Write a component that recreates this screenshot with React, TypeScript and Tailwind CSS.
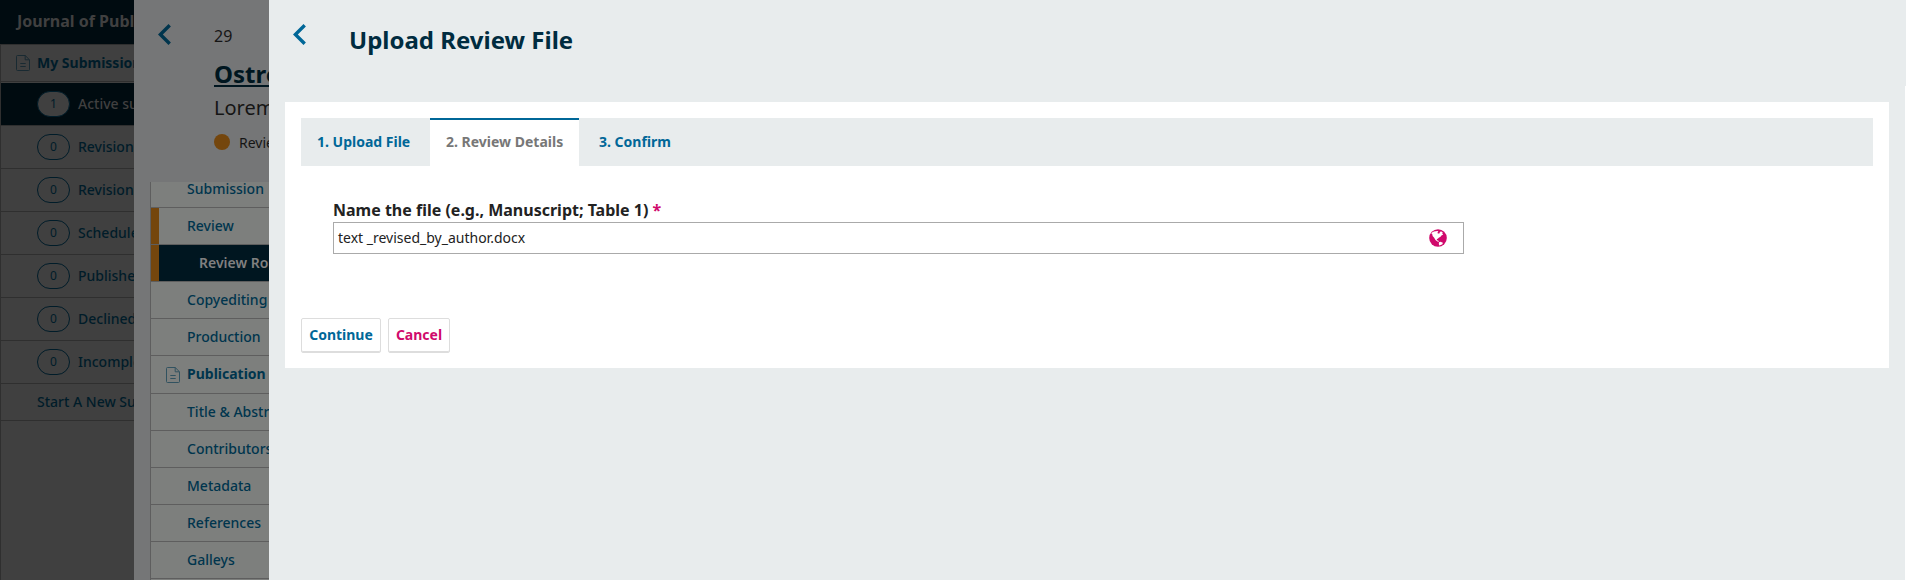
import type { ReactNode } from 'react';

const statusItems = ['Revision', 'Revision', 'Schedule', 'Publishe', 'Declined', 'Incomple'];
const publicationItems = ['Title & Abstract', 'Contributors', 'Metadata', 'References', 'Galleys'];

function DocIcon({ className }: { className: string }) {
  return (
    <svg className={className} width="14" height="16" viewBox="0 0 14 16" fill="none" stroke="currentColor">
      <path d="M1.5.5h7.7l4.3 4.3v9.7a1 1 0 0 1-1 1h-11a1 1 0 0 1-1-1v-13a1 1 0 0 1 1-1zM9.2.5v4.3h4.3M4.3 8.5h5.4M4.3 11.5h5.4" />
    </svg>
  );
}

function GlobeIcon() {
  return (
    <svg width="18" height="18" viewBox="0 0 18 18">
      <circle cx="9" cy="9" r="8.8" fill="#d00a6c" />
      <path
        fill="#fff"
        d="M3 3.6 5 2.4l3.4-.5 1 .6-.9.9.3 1.1 1.6.1.4-1.4L12 2.3l1.9 1.5-.7.6 1 1.3-1.5.5-1.2 1.6-1.8.9-.8 1.1-1.2.2.4 1.3 1.4.4.3 1.2-1.3-.5-2-1.5L5 8.5 3.6 7.1 3.3 5.2l-.9-.5zM10 13.2l1.5-.5 2.4 1.1-.5 1.4-1.6.9-1.7.4-.3-1.7z"
      />
    </svg>
  );
}

function Chevron({ className }: { className: string }) {
  return (
    <svg className={className} width="13" height="21" viewBox="0 0 13 21" fill="none" stroke="currentColor" strokeWidth="3.4">
      <path d="M11.7 1.3 2.4 10.5l9.3 9.2" />
    </svg>
  );
}

function Label({ children }: { children: ReactNode }) {
  return <span className="pb-0.5">{children}</span>;
}

function Pill({ children, active }: { children: ReactNode; active?: boolean }) {
  return (
    <span
      className={
        active
          ? 'flex h-[26px] w-[33px] shrink-0 items-center justify-center rounded-full border border-[#001c29] bg-[#404040] text-[12px] font-normal text-[#001c29]'
          : 'flex h-[26px] w-[33px] shrink-0 items-center justify-center rounded-full border border-[#001c29] text-[12px] font-normal text-[#001c29]'
      }
    >
      {children}
    </span>
  );
}

function SubItem({ label }: { label: string }) {
  return (
    <a className="flex h-[37px] shrink-0 items-center border-b border-[#5e5e5e] pl-[36px] text-[#00354d]">
      <Label>{label}</Label>
    </a>
  );
}

function Background() {
  return (
    <aside className="flex w-[134px] shrink-0 flex-col overflow-hidden whitespace-nowrap bg-[#404040] text-[14px] font-medium text-[#001c29]">
      <div className="flex h-[44px] shrink-0 items-center bg-[#000b10] pb-[3px] pl-[17px] text-[16px] font-bold text-[#404040]">
        Journal of Public Knowledge
      </div>
      <nav className="flex grow flex-col border-l border-[#2f2f2f]">
        <a className="flex h-[38px] shrink-0 items-center border-y border-[#2f2f2f] pl-[15px] font-bold">
          <DocIcon className="mr-[7px] shrink-0 opacity-60" />
          <Label>My Submissions</Label>
        </a>
        <a className="mt-px flex h-[43px] shrink-0 items-center gap-2 border-b border-[#2f2f2f] bg-[#000b10] pl-[36px] text-[#404040]">
          <Pill active>1</Pill>
          <Label>Active submissions</Label>
        </a>
        {statusItems.map((label, i) => (
          <a key={i} className="flex h-[43px] shrink-0 items-center gap-2 border-b border-[#2f2f2f] pl-[36px]">
            <Pill>0</Pill>
            <Label>{label}</Label>
          </a>
        ))}
        <a className="flex h-[37px] shrink-0 items-center border-b border-[#2f2f2f] pl-[36px]">
          <Label>Start A New Submission</Label>
        </a>
      </nav>
    </aside>
  );
}

function WorkflowPanel() {
  return (
    <section className="flex w-[135px] shrink-0 flex-col overflow-hidden whitespace-nowrap bg-[#757677] text-[#151515]">
      <header className="flex h-[182px] shrink-0">
        <Chevron className="mt-6 ml-6 shrink-0 text-[#00354d]" />
        <div className="ml-[43px] flex flex-col">
          <p className="mt-6 h-6 text-[16px] leading-6">29</p>
          <h2 className="mt-[11px] h-[30px] text-[24px] leading-[30px] font-bold text-[#001620] underline">Ostrom</h2>
          <p className="mt-1 h-[30px] text-[20px] leading-[30px]">Lorem ipsum</p>
          <p className="mt-[9px] flex h-5 items-center gap-[9px] text-[14px]">
            <span className="size-4 shrink-0 rounded-full bg-[#74460d]" />
            Review
          </p>
        </div>
      </header>
      <nav className="ml-4 flex grow flex-col border-l border-[#5e5e5e] bg-[#7d7f7d] text-[14px] font-medium">
        <a className="flex h-[26px] shrink-0 items-center border-b border-[#5e5e5e] pb-3 pl-[36px] text-[#00354d]">Submission</a>
        <a className="flex h-[37px] shrink-0 items-center border-b border-[#5e5e5e] text-[#00354d]">
          <span className="mr-7 h-full w-2 bg-[#74460d]" />
          <Label>Review</Label>
        </a>
        <a className="flex h-[37px] shrink-0 items-center border-b border-[#5e5e5e] bg-[#001620] font-semibold text-[#808080]">
          <span className="mr-10 h-full w-2 shrink-0 bg-[#74460d]" />
          <Label>Review Round 1</Label>
        </a>
        <SubItem label="Copyediting" />
        <SubItem label="Production" />
        <a className="flex h-[38px] shrink-0 items-center border-b border-[#5e5e5e] pl-[15px] font-bold text-[#00354d]">
          <DocIcon className="mr-[7px] shrink-0 opacity-60" />
          <Label>Publication</Label>
        </a>
        {publicationItems.map((label) => (
          <SubItem key={label} label={label} />
        ))}
      </nav>
    </section>
  );
}

function UploadPanel() {
  return (
    <main className="flex grow bg-[#e8eced] text-[#222]">
      <div className="flex grow flex-col pl-4">
        <header className="flex h-[102px] shrink-0">
          <Chevron className="mt-6 ml-2 text-[#006798]" />
          <h1 className="mt-6 ml-[43px] h-8 text-[24px] leading-8 font-bold text-[#002c40]">Upload Review File</h1>
        </header>
        <div className="mr-4 flex h-[266px] flex-col bg-white px-4 pt-4">
          <div className="flex h-12 shrink-0 bg-[#e8eced] text-[14px] font-bold text-[#006798]">
            <a className="flex w-[129px] items-center pb-0.5 pl-4">1. Upload File</a>
            <a className="flex w-[149px] items-center border-t-2 border-[#006798] bg-white pb-1 pl-4 text-[#777]">2. Review Details</a>
            <a className="flex items-center pb-0.5 pl-5">3. Confirm</a>
          </div>
          <form className="mt-8 flex flex-col pl-8">
            <label className="h-6 text-[16px] leading-6 font-bold">
              Name the file (e.g., Manuscript; Table 1) <span className="text-[#d00a6c]">*</span>
            </label>
            <div className="flex h-8 w-[1131px] items-center justify-between border border-[#aaa] pr-4 pl-1 text-[14px]">
              <Label>text _revised_by_author.docx</Label>
              <GlobeIcon />
            </div>
          </form>
          <div className="mt-16 flex gap-[7px] text-[14px] font-bold">
            <button className="h-[35px] w-20 rounded-[2px] border border-[#ddd] pb-0.5 text-[#006798] shadow-[inset_0_-1px_0_#ddd]">Continue</button>
            <button className="h-[35px] w-[62px] rounded-[2px] border border-[#ddd] pb-0.5 text-[#d00a6c] shadow-[inset_0_-1px_0_#ddd]">Cancel</button>
          </div>
        </div>
      </div>
      <div className="mt-[86px] w-px bg-white" />
    </main>
  );
}

export default function App() {
  return (
    <div className="flex h-[580px] w-[1906px] overflow-hidden font-['Noto_Sans',sans-serif]">
      <Background />
      <WorkflowPanel />
      <UploadPanel />
    </div>
  );
}
